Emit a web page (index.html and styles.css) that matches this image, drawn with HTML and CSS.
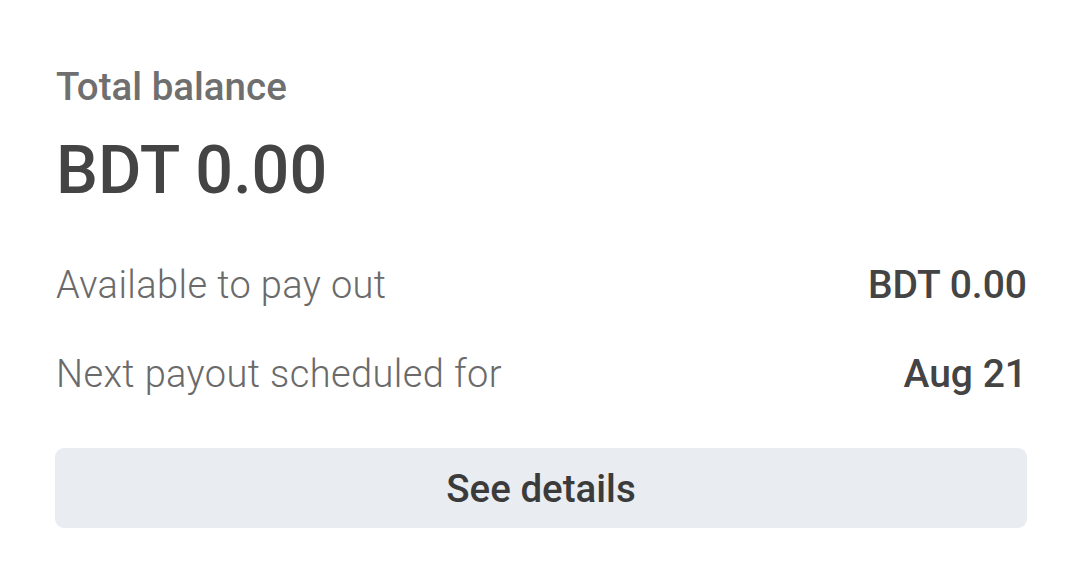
FILE: index.html
```html
<!DOCTYPE html>
<html>
<head>
<meta charset="utf-8">
<link rel="stylesheet" href="styles.css">
</head>
<body>
<div class="card">
  <div class="title">Total balance</div>
  <div class="amount">BDT 0.00</div>
  <div class="rows">
    <div class="row"><span class="label">Available to pay out</span><span class="value">BDT 0.00</span></div>
    <div class="row"><span class="label">Next payout scheduled for</span><span class="value">Aug 21</span></div>
  </div>
  <button class="btn">See details</button>
</div>
</body>
</html>
```

FILE: styles.css
```css
html, body { margin: 0; padding: 0; background: #ffffff; }
body { font-family: Roboto, "Noto Sans", sans-serif; width: 1080px; height: 574px; overflow: hidden; }
.card { padding: 63px 53px 0 56px; display: flex; flex-direction: column; }
.title { font-size: 38.5px; font-weight: 500; color: #6f6f6f; line-height: 48px; }
.amount { font-size: 66.5px; font-weight: 500; color: #444444; line-height: 80px; margin-top: 19px; }
.rows { display: flex; flex-direction: column; gap: 41px; margin-top: 51px; }
.row { display: flex; justify-content: space-between; align-items: baseline; line-height: 48px; }
.label { font-size: 38px; font-weight: 300; letter-spacing: 0.4px; color: #6a6a6a; }
.value { font-size: 39px; font-weight: 500; color: #444444; }
.btn { margin-top: 50px; margin-left: -1px; height: 80px; border: none; border-radius: 9px; background: #e9ecf0; font-family: Roboto, sans-serif; font-size: 38.5px; font-weight: 500; color: #3b3b3b; padding: 0; }
```
